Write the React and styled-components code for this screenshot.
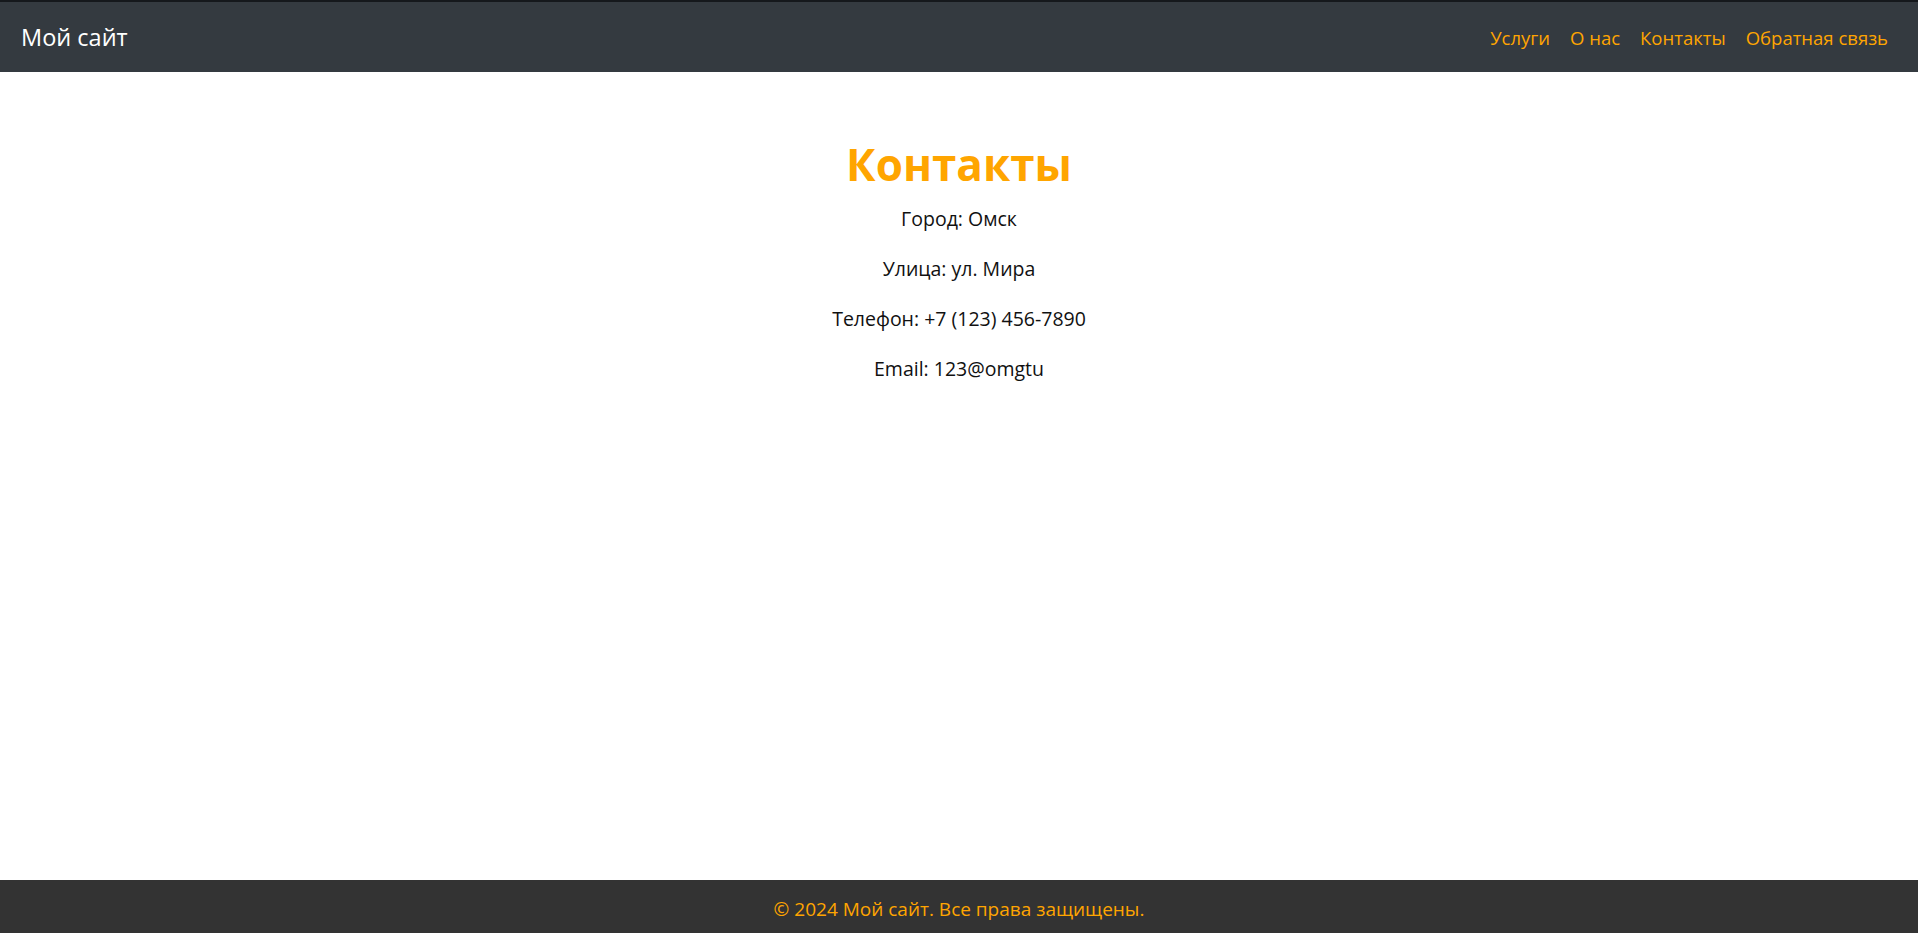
import React from 'react';
import styled, { createGlobalStyle } from 'styled-components';

const GlobalStyle = createGlobalStyle`
  html, body {
    margin: 0;
    padding: 0;
  }
  body {
    font-family: "Open Sans", "Noto Sans", sans-serif;
    color: #212529;
    background: #fff;
  }
`;

const Page = styled.div`
  display: flex;
  flex-direction: column;
  min-height: 933px;
`;

const Navbar = styled.nav`
  display: flex;
  align-items: center;
  justify-content: space-between;
  height: 70px;
  border-top: 2px solid #15181c;
  background: #343a40;
  padding: 0 20px;
`;

const Brand = styled.a`
  color: #fff;
  font-size: 23.5px;
  text-decoration: none;
  padding-left: 1px;
`;

const NavList = styled.ul`
  display: flex;
  list-style: none;
  margin: 0;
  padding: 0;
`;

const NavLink = styled.a`
  display: block;
  padding: 10px;
  color: #ffa500;
  font-size: 18.5px;
  text-decoration: none;
`;

const Main = styled.main`
  flex: 1;
  display: flex;
  flex-direction: column;
  align-items: center;
  padding-top: 62px;
`;

const Title = styled.h1`
  margin: 0 0 10px;
  color: #ffa500;
  font-size: 44px;
  font-weight: 700;
  line-height: 60px;
`;

const Line = styled.p`
  margin: 0 0 20px;
  font-size: 19.5px;
  line-height: 30px;
  color: #111;
`;

const Footer = styled.footer`
  display: flex;
  align-items: center;
  justify-content: center;
  height: 53px;
  background: #333;
  color: #ffa500;
  font-size: 19px;
  padding-top: 4px;
  box-sizing: border-box;
`;

const links = ['Услуги', 'О нас', 'Контакты', 'Обратная связь'];

const contacts = [
  'Город: Омск',
  'Улица: ул. Мира',
  'Телефон: +7 (123) 456-7890',
  'Email: 123@omgtu',
];

export default function App() {
  return (
    <Page>
      <GlobalStyle />
      <Navbar>
        <Brand href="#">Мой сайт</Brand>
        <NavList>
          {links.map((l) => (
            <li key={l}>
              <NavLink href="#">{l}</NavLink>
            </li>
          ))}
        </NavList>
      </Navbar>
      <Main>
        <Title>Контакты</Title>
        {contacts.map((c) => (
          <Line key={c}>{c}</Line>
        ))}
      </Main>
      <Footer>© 2024 Мой сайт. Все права защищены.</Footer>
    </Page>
  );
}
